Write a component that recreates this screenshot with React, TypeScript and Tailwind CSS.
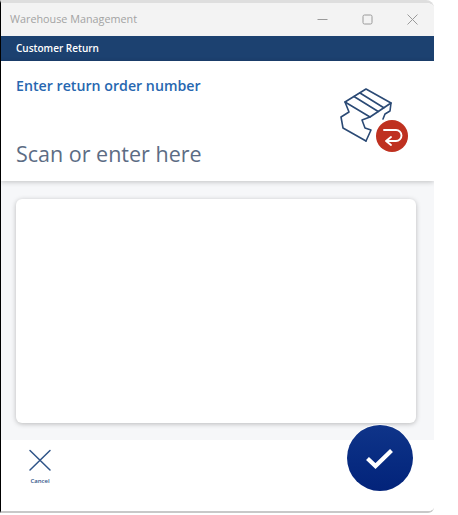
const font = { fontFamily: '"Open Sans", "Noto Sans", sans-serif' };

function BoxReturnIcon() {
  return (
    <svg width="72" height="68" viewBox="0 0 72 68" fill="none" className="block">
      <g stroke="#2b4a75" strokeWidth="1.6" strokeLinejoin="round" strokeLinecap="round">
        <path d="M7 16 L28 3 L53 17 L32 31 Z" />
        <path d="M16 10.5 L40.2 25.5" />
        <path d="M22 7 L45.8 21.8" />
        <path d="M7 16 L11 26 L3 31 L5 42 L28 55" />
        <path d="M32 31 L24 34 L27 42 L33 44 L28 55" />
        <path d="M53 17 L52 25 L47 28 L45 33" />
      </g>
      <circle cx="54" cy="50" r="16" fill="#bf3120" />
      <path
        d="M46 44 H58 a5.5 5.5 0 0 1 0 11 H48 M53 51 L48 55 L53 59"
        stroke="#fff"
        strokeWidth="1.9"
        strokeLinecap="round"
        strokeLinejoin="round"
        fill="none"
      />
    </svg>
  );
}

export default function App() {
  return (
    <div className="h-[515px] w-[458px] overflow-hidden bg-white" style={font}>
      <div className="relative flex h-[513px] w-[434px] flex-col overflow-hidden rounded-tr-lg rounded-br-md border-t-[3px] border-b-2 border-l border-t-[#dedede] border-b-[#c8c8c8] border-l-black bg-white">
        <div className="flex h-[33px] shrink-0 items-center justify-between bg-[#f3f3f3] pl-[9px] pr-4">
          <span className="text-[10.8px] text-[#a3a3a3]">Warehouse Management</span>
          <div className="flex items-center gap-[34px] text-[#9a9a9a]">
            <svg width="11" height="11" viewBox="0 0 11 11"><path d="M0.5 5.5H10.5" stroke="currentColor" /></svg>
            <svg width="11" height="11" viewBox="0 0 11 11" fill="none"><rect x="1" y="1" width="9" height="9" rx="1.5" stroke="currentColor" /></svg>
            <svg width="11" height="11" viewBox="0 0 11 11" fill="none"><path d="M0.5 0.5L10.5 10.5M10.5 0.5L0.5 10.5" stroke="currentColor" /></svg>
          </div>
        </div>
        <div className="flex h-[25px] shrink-0 items-center bg-[#1c4170] pl-[15px] text-[10px] font-semibold text-white">
          Customer Return
        </div>
        <div className="z-10 flex h-[120px] shrink-0 justify-between bg-white pl-[15px] pr-[24px] shadow-[0_1px_5px_rgba(0,0,0,0.22)]">
          <div className="flex flex-col">
            <h1 className="mt-[15px] text-[14.2px] leading-[20px] font-semibold text-[#2767b0]">Enter return order number</h1>
            <p className="mt-[43px] text-[21.5px] leading-[30px] text-[#5c6c84]">Scan or enter here</p>
          </div>
          <div className="mt-[25px]"><BoxReturnIcon /></div>
        </div>
        <div className="flex h-[259px] shrink-0 bg-[#f6f7f9] px-[15px] pt-[18px]">
          <div className="h-[224px] w-[400px] rounded-md bg-white shadow-[0_1px_5px_rgba(0,0,0,0.25)]" />
        </div>
        <div className="flex flex-1 items-start bg-white pl-[27px] pt-[8px]">
          <button className="flex flex-col items-center gap-[5px]">
            <svg width="24" height="24" viewBox="0 0 24 24" fill="none">
              <path d="M2 2.5L22 22M22 2.5L2 22" stroke="#2f5488" strokeWidth="1.5" strokeLinecap="round" />
            </svg>
            <span className="text-[6px] leading-[8px] font-semibold text-[#2f5488]">Cancel</span>
          </button>
        </div>
        <button className="absolute top-[422px] left-[346px] flex size-[66px] items-center justify-center rounded-full bg-gradient-to-b from-[#0f3489] to-[#03237a] shadow-[0_0_0_1px_rgba(255,255,255,0.7)]">
          <svg width="30" height="24" viewBox="0 0 30 24" fill="none">
            <path d="M2.5 12.5L10.5 20L26.5 4.5" stroke="#fff" strokeWidth="4.2" strokeLinejoin="miter" />
          </svg>
        </button>
      </div>
    </div>
  );
}
